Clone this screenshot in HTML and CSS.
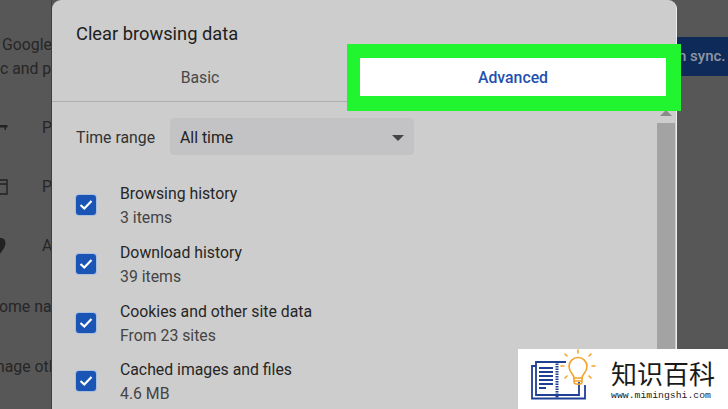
FILE: index.html
```html
<!DOCTYPE html>
<html lang="en">
<head>
<meta charset="utf-8">
<title>Clear browsing data</title>
<link rel="stylesheet" href="styles.css">
</head>
<body>
<div class="page">
  <aside class="behind-left">
    <div class="line line-google">Google</div>
    <div class="line">c and p</div>
    <div class="item item-first">
      <svg class="bg-icon" width="8" height="8" viewBox="0 0 8 8"><path d="M0 1H7.500V3.500H6V6H4.500V3.500H0Z" fill="#222"/></svg>
      <span class="item-text">P</span>
    </div>
    <div class="item">
      <svg class="bg-icon" width="8" height="16" viewBox="0 0 8 16"><path d="M-3 1H7V15H-3ZM-3 5H7" fill="none" stroke="#222" stroke-width="1.400"/></svg>
      <span class="item-text">P</span>
    </div>
    <div class="item">
      <svg class="bg-icon" width="8" height="16" viewBox="0 0 8 16"><path d="M-3 0H1C4 0 5.500 2.500 5.500 5C5.500 9 2 13 0 16H-3Z" fill="#222"/></svg>
      <span class="item-text">A</span>
    </div>
    <div class="line line-home">ome na</div>
    <div class="line line-manage">nage otl</div>
  </aside>

  <main class="dialog">
    <h1 class="title">Clear browsing data</h1>
    <div class="tabs">
      <div class="tab">Basic</div>
      <div class="tab tab-active">Advanced</div>
    </div>
    <div class="body">
      <div class="list">
        <div class="range">
          <span class="range-label">Time range</span>
          <div class="select">
            <span>All time</span>
            <span class="caret"></span>
          </div>
        </div>
        <div class="row">
          <span class="box"><svg width="14" height="12" viewBox="0 0 14 12"><path d="M1.500 6L5.300 9.500L12.500 2" fill="none" stroke="#fff" stroke-width="2.200"/></svg></span>
          <div class="row-text"><div class="row-title">Browsing history</div><div class="row-sub">3 items</div></div>
        </div>
        <div class="row">
          <span class="box"><svg width="14" height="12" viewBox="0 0 14 12"><path d="M1.500 6L5.300 9.500L12.500 2" fill="none" stroke="#fff" stroke-width="2.200"/></svg></span>
          <div class="row-text"><div class="row-title">Download history</div><div class="row-sub">39 items</div></div>
        </div>
        <div class="row">
          <span class="box"><svg width="14" height="12" viewBox="0 0 14 12"><path d="M1.500 6L5.300 9.500L12.500 2" fill="none" stroke="#fff" stroke-width="2.200"/></svg></span>
          <div class="row-text"><div class="row-title">Cookies and other site data</div><div class="row-sub">From 23 sites</div></div>
        </div>
        <div class="row">
          <span class="box"><svg width="14" height="12" viewBox="0 0 14 12"><path d="M1.500 6L5.300 9.500L12.500 2" fill="none" stroke="#fff" stroke-width="2.200"/></svg></span>
          <div class="row-text"><div class="row-title">Cached images and files</div><div class="row-sub">4.6 MB</div></div>
        </div>
      </div>
      <div class="scrollbar">
        <span class="scroll-arrow"></span>
        <div class="scroll-thumb"></div>
      </div>
    </div>
  </main>

  <aside class="behind-right">
    <div class="sync-button"><span class="sync-label">n sync.</span></div>
  </aside>
</div>

<div class="logo">
  <svg class="logo-mark" width="70" height="60" viewBox="0 0 70 60">
    <g fill="none" stroke="#1d3f94" stroke-width="1.800">
      <path d="M10 17H6V49.500H59V36"/>
      <path d="M31 13H10V46H31"/>
      <path d="M31 13H40M31 46H53V33"/>
      <path d="M13 19H27M13 23H27M13 27H27M13 31H27M13 35H27M13 39H20" stroke-width="1.800"/>
      <path d="M31 12V50" stroke-width="3" stroke-dasharray="1.500 1"/>
    </g>
    <g fill="none" stroke="#f3a32a" stroke-width="1.600" stroke-linecap="round">
      <path d="M48 29C48 25 43 23.500 43 17.500A9 9 0 0 1 61 17.500C61 23.500 56 25 56 29Z"/>
      <path d="M48 29V33C48 36 56 36 56 33V29M48 32H56"/>
      <path d="M52 1V4M39 5L41 7M65 5L63 7M35 17H38M66 17H69M39 29L41 27M65 29L63 27"/>
    </g>
  </svg>
  <div class="logo-text">
    <div class="logo-name">知识百科</div>
    <div class="logo-url">www.mimingshi.com</div>
  </div>
</div>
</body>
</html>
```

FILE: styles.css
```css
* {
  box-sizing: border-box;
}

html,
body {
  margin: 0;
  height: 100%;
  overflow: hidden;
}

body {
  background: #575757;
  font-family: Roboto, "Liberation Sans", sans-serif;
}

.page {
  display: flex;
  height: 409px;
}

.behind-left {
  flex: 0 0 52px;
  overflow: hidden;
  padding-top: 33px;
  color: #262626;
  font-size: 15.800px;
  white-space: nowrap;
  border-right: 1px solid #3e3e3e;
}

.line {
  height: 24px;
  line-height: 24px;
}

.line-google {
  padding-left: 2px;
}

.line-home {
  margin-top: 20px;
  margin-left: -1px;
}

.line-manage {
  margin-top: 36px;
  margin-left: -4px;
}

.item {
  display: flex;
  align-items: center;
  height: 59px;
}

.item-first {
  margin-top: 17px;
}

.bg-icon {
  flex: 0 0 8px;
  overflow: hidden;
}

.item-text {
  margin-left: 34px;
}

.dialog {
  flex: 0 0 625px;
  min-width: 0;
  height: 409px;
  background: #cdcdcd;
  border-radius: 9px 9px 0 0;
  border-right: 1px solid #ececec;
  display: flex;
  flex-direction: column;
  color: #222;
}

.title {
  margin: 0;
  padding: 23px 0 0 24px;
  height: 58px;
  font-size: 18.300px;
  line-height: 21px;
  font-weight: 400;
  color: #202020;
}

.tabs {
  display: grid;
  grid-template-columns: 296px minmax(0, 1fr);
  height: 44px;
  border-bottom: 1px solid #aeaeae;
  font-size: 15.800px;
  flex: none;
}

.tab {
  height: 38px;
  line-height: 40px;
  text-align: center;
  color: #484848;
}

.tab-active {
  position: relative;
  z-index: 2;
  height: 67px;
  width: 334px;
  margin: -14px 0 0 -1px;
  border: solid #21f52f;
  border-width: 14px 15px 15px 13px;
  background: #fff;
  color: #1f50ae;
  font-weight: 500;
}

.body {
  flex: 1;
  min-height: 0;
  display: flex;
}

.list {
  flex: 1;
  padding-left: 24px;
  min-width: 0;
}

.range {
  display: flex;
  align-items: center;
  margin-top: 16px;
  font-size: 15.800px;
}

.range-label {
  width: 94px;
  padding-top: 2px;
  color: #333;
}

.select {
  width: 244px;
  height: 37px;
  padding: 2px 10px 0;
  border-radius: 4px;
  background: #c3c3c5;
  display: flex;
  align-items: center;
  justify-content: space-between;
  color: #222;
}

.caret {
  width: 0;
  height: 0;
  border-left: 6px solid transparent;
  border-right: 6px solid transparent;
  border-top: 6px solid #444;
}

.row {
  display: flex;
  align-items: center;
  height: 58.700px;
  font-size: 15.800px;
}

.range + .row {
  margin-top: 21px;
}

.box {
  flex: 0 0 20px;
  height: 20px;
  margin-right: 24px;
  border-radius: 3px;
  background: #1a55b6;
  box-shadow: 0 0 0 1px #a9bfdf;
  display: flex;
  align-items: center;
  justify-content: center;
}

.row-text {
  padding-top: 2px;
}

.row-title,
.row-sub {
  height: 24px;
  line-height: 24px;
  white-space: nowrap;
}

.row-title {
  color: #262626;
}

.row-sub {
  color: #444;
}

.scrollbar {
  flex: 0 0 18px;
  display: flex;
  flex-direction: column;
  align-items: center;
  margin-right: 1px;
  padding-top: 8px;
}

.scroll-arrow {
  width: 0;
  height: 0;
  border-left: 6px solid transparent;
  border-right: 6px solid transparent;
  border-bottom: 6px solid #8a8a8a;
}

.scroll-thumb {
  flex: 1;
  width: 100%;
  margin-top: 7px;
  background: #a3a3a3;
}

.behind-right {
  flex: 1;
  min-width: 0;
  overflow: hidden;
  padding-top: 37px;
}

.sync-button {
  height: 39px;
  line-height: 39px;
  background: #0e2a58;
  color: #8e95a3;
  font-size: 15px;
  font-weight: 500;
  white-space: nowrap;
}

.sync-label {
  display: block;
  margin-left: 1px;
}

.logo {
  position: absolute;
  right: 0;
  bottom: 0;
  width: 210px;
  height: 60px;
  background: #fff;
  display: flex;
  padding-left: 8px;
}

.logo-mark {
  flex: none;
}

.logo-text {
  margin-left: 15px;
  padding-top: 11px;
}

.logo-name {
  font-family: "Noto Sans CJK SC", sans-serif;
  font-size: 26px;
  line-height: 26px;
  color: #1a1a1a;
  white-space: nowrap;
}

.logo-url {
  margin-top: 4px;
  font-family: "Liberation Mono", monospace;
  font-size: 9.800px;
  line-height: 11px;
  color: #222;
  white-space: nowrap;
}
```
